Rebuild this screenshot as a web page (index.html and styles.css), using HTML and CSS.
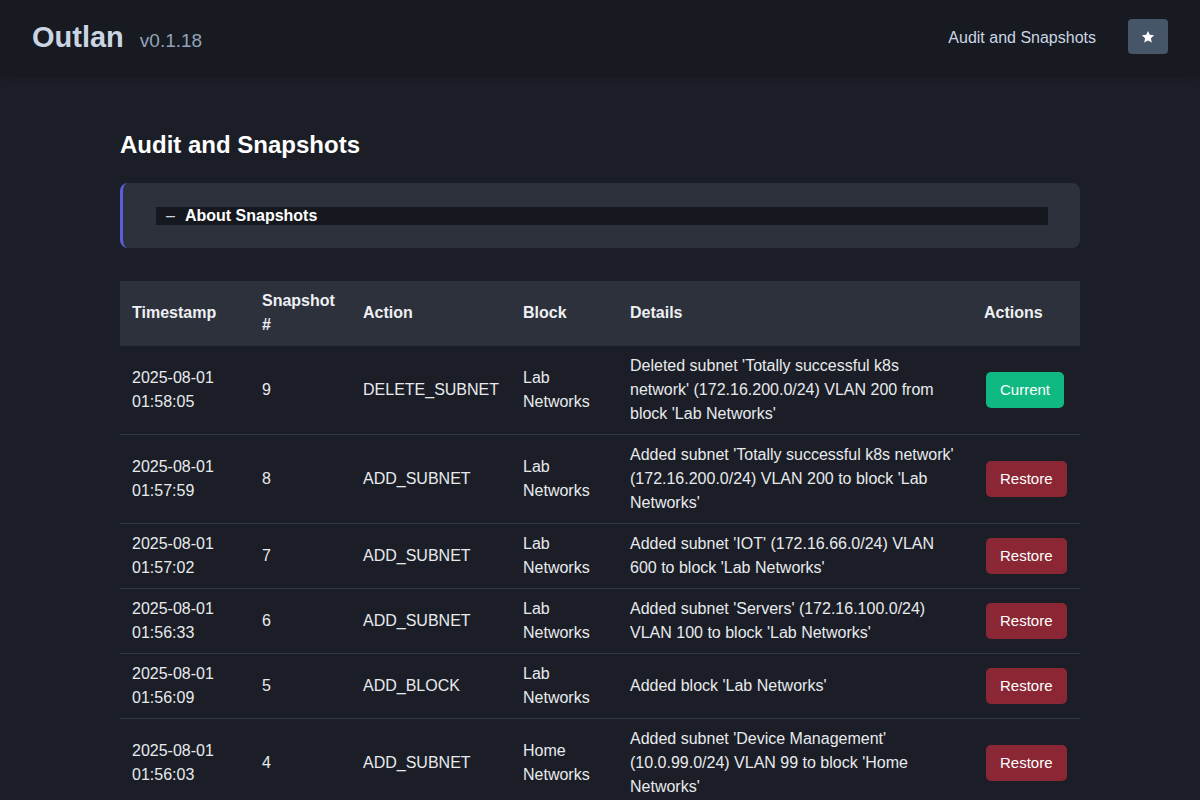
FILE: index.html
```html
<!DOCTYPE html>
<html lang="en">
<head>
<meta charset="utf-8">
<title>Outlan - Audit and Snapshots</title>
<link rel="stylesheet" href="styles.css">
</head>
<body>
<header class="topbar">
  <div class="brand">
    <span class="brand-name">Outlan</span>
    <span class="brand-version">v0.1.18</span>
  </div>
  <nav class="nav">
    <a class="nav-link" href="#">Audit and Snapshots</a>
    <button class="theme-btn" type="button" aria-label="Toggle theme">
      <svg width="14" height="14" viewBox="0 0 24 24"><polygon fill="#ffffff" points="12,1.5 15.1,8.3 22.5,9.1 17,14.1 18.5,21.5 12,17.8 5.5,21.5 7,14.1 1.5,9.1 8.9,8.3"/></svg>
    </button>
  </nav>
</header>
<main class="main">
  <h2 class="page-title">Audit and Snapshots</h2>
  <details class="about" open>
    <summary class="about-summary"><span class="about-dash">–</span><span>About Snapshots</span></summary>
  </details>
  <table class="audit">
    <colgroup>
      <col class="c-ts"><col class="c-snap"><col class="c-act"><col class="c-block"><col class="c-det"><col class="c-btn">
    </colgroup>
    <thead>
      <tr><th>Timestamp</th><th>Snapshot #</th><th>Action</th><th>Block</th><th>Details</th><th>Actions</th></tr>
    </thead>
    <tbody>
      <tr><td>2025-08-01 01:58:05</td><td>9</td><td>DELETE_SUBNET</td><td>Lab Networks</td><td>Deleted subnet 'Totally successful k8s network' (172.16.200.0/24) VLAN 200 from block 'Lab Networks'</td><td><button class="btn btn-current" type="button">Current</button></td></tr>
      <tr><td>2025-08-01 01:57:59</td><td>8</td><td>ADD_SUBNET</td><td>Lab Networks</td><td>Added subnet 'Totally successful k8s network' (172.16.200.0/24) VLAN 200 to block 'Lab Networks'</td><td><button class="btn btn-restore" type="button">Restore</button></td></tr>
      <tr><td>2025-08-01 01:57:02</td><td>7</td><td>ADD_SUBNET</td><td>Lab Networks</td><td>Added subnet 'IOT' (172.16.66.0/24) VLAN 600 to block 'Lab Networks'</td><td><button class="btn btn-restore" type="button">Restore</button></td></tr>
      <tr><td>2025-08-01 01:56:33</td><td>6</td><td>ADD_SUBNET</td><td>Lab Networks</td><td>Added subnet 'Servers' (172.16.100.0/24) VLAN 100 to block 'Lab Networks'</td><td><button class="btn btn-restore" type="button">Restore</button></td></tr>
      <tr><td>2025-08-01 01:56:09</td><td>5</td><td>ADD_BLOCK</td><td>Lab Networks</td><td>Added block 'Lab Networks'</td><td><button class="btn btn-restore" type="button">Restore</button></td></tr>
      <tr><td>2025-08-01 01:56:03</td><td>4</td><td>ADD_SUBNET</td><td>Home Networks</td><td>Added subnet 'Device Management' (10.0.99.0/24) VLAN 99 to block 'Home Networks'</td><td><button class="btn btn-restore" type="button">Restore</button></td></tr>
    </tbody>
  </table>
</main>
</body>
</html>
```

FILE: styles.css
```css
* { box-sizing: border-box; }
html, body {
  margin: 0;
  padding: 0;
  background: #1b1e26;
  color: #e5e7eb;
  font-family: "Liberation Sans", Arial, sans-serif;
  font-size: 16px;
}
.topbar {
  height: 74px;
  background: #171a21;
  display: flex;
  align-items: center;
  justify-content: space-between;
  padding: 0 32px;
  box-shadow: 0 2px 8px rgba(0, 0, 0, 0.25);
  position: relative;
}
.brand {
  display: flex;
  align-items: baseline;
  gap: 16px;
}
.brand-name {
  font-size: 29px;
  font-weight: bold;
  color: #cbd5e1;
}
.brand-version {
  font-size: 19px;
  color: #94a3b8;
}
.nav {
  display: flex;
  align-items: center;
  gap: 32px;
}
.nav-link {
  color: #cbd5e1;
  text-decoration: none;
  font-size: 16px;
  padding-top: 2px;
}
.theme-btn {
  width: 40px;
  height: 35px;
  border: none;
  border-radius: 4px;
  background: #475569;
  display: flex;
  align-items: center;
  justify-content: center;
  padding: 0;
  margin-bottom: 1px;
}
.main {
  width: 960px;
  margin: 0 auto;
  padding-top: 57px;
}
.page-title {
  margin: 0 0 24px;
  font-size: 24px;
  line-height: 28px;
  font-weight: bold;
  color: #ffffff;
}
.about {
  background: #2d313c;
  border-left: 3px solid #5b5fd9;
  border-radius: 8px;
  padding: 24px 32px 23px 33px;
  margin-bottom: 33px;
}
.about-summary {
  list-style: none;
  background: #16181f;
  display: flex;
  align-items: center;
  gap: 10px;
  padding: 0 10px;
  height: 18px;
  font-weight: bold;
  color: #ffffff;
  font-size: 16px;
}
.about-summary::-webkit-details-marker { display: none; }
.about-dash {
  color: #cbd5e1;
  font-weight: normal;
}
.audit {
  width: 960px;
  border-collapse: collapse;
  table-layout: fixed;
}
.c-ts { width: 130px; }
.c-snap { width: 101px; }
.c-act { width: 160px; }
.c-block { width: 107px; }
.c-det { width: 354px; }
.c-btn { width: 108px; }
.audit th {
  background: #2d313c;
  color: #eef0f3;
  font-weight: bold;
  text-align: left;
  padding: 8px 12px;
  line-height: 24px;
  vertical-align: middle;
  border-bottom: 1px solid #2a2d38;
}
.audit td {
  padding: 8px 12px;
  line-height: 24px;
  vertical-align: middle;
  border-bottom: 1px solid #333645;
  color: #e8eaee;
}
.btn {
  border: none;
  border-radius: 5px;
  color: #ffffff;
  font-family: "Liberation Sans", Arial, sans-serif;
  font-size: 15px;
  line-height: 20px;
  padding: 8px 14px;
  margin-left: 2px;
}
.btn-current { background: #10b981; }
.btn-restore { background: #8b2635; }
```
